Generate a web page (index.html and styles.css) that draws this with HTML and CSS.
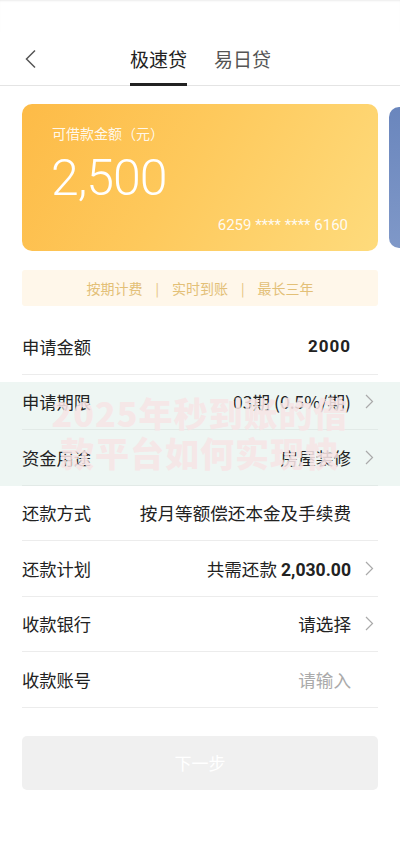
FILE: index.html
```html
<!DOCTYPE html>
<html lang="zh-CN">
<head>
<meta charset="utf-8">
<title>极速贷</title>
<link rel="stylesheet" href="styles.css">
</head>
<body>
<div class="page">
  <div class="statusbar"></div>
  <header class="nav">
    <span class="back">
      <svg width="14" height="20" viewBox="0 0 14 20"><polyline points="11,1.5 2.5,10 11,18.5" fill="none" stroke="#555" stroke-width="1.5"/></svg>
    </span>
    <div class="tabs">
      <span class="tab active">极速贷</span>
      <span class="tab">易日贷</span>
    </div>
  </header>

  <section class="carousel">
    <div class="card gold">
      <div class="card-label">可借款金额（元）</div>
      <div class="card-amount">2,500</div>
      <div class="card-no">6259 **** **** 6160</div>
    </div>
    <div class="card blue"></div>
  </section>

  <div class="strip"><span>按期计费</span><span class="sep">|</span><span>实时到账</span><span class="sep">|</span><span>最长三年</span></div>

  <div class="form">
    <div class="row"><span class="label">申请金额</span><span class="value bold">2000</span><span class="chev empty"></span></div>
    <div class="band">
      <div class="row"><span class="label">申请期限</span><span class="value">03期 (0.5%/期)</span><span class="chev"><svg width="9" height="15" viewBox="0 0 9 15"><polyline points="1,1 7.5,7.5 1,14" fill="none" stroke="#aaa" stroke-width="1.2"/></svg></span></div>
      <div class="row"><span class="label">资金用途</span><span class="value">房屋装修</span><span class="chev"><svg width="9" height="15" viewBox="0 0 9 15"><polyline points="1,1 7.5,7.5 1,14" fill="none" stroke="#aaa" stroke-width="1.2"/></svg></span></div>
      <div class="watermark">2025年秒到账的借<br>款平台如何实现快</div>
    </div>
    <div class="row"><span class="label">还款方式</span><span class="value">按月等额偿还本金及手续费</span><span class="chev empty"></span></div>
    <div class="row"><span class="label">还款计划</span><span class="value">共需还款 <b class="num">2,030.00</b></span><span class="chev"><svg width="9" height="15" viewBox="0 0 9 15"><polyline points="1,1 7.5,7.5 1,14" fill="none" stroke="#aaa" stroke-width="1.2"/></svg></span></div>
    <div class="row"><span class="label">收款银行</span><span class="value">请选择</span><span class="chev"><svg width="9" height="15" viewBox="0 0 9 15"><polyline points="1,1 7.5,7.5 1,14" fill="none" stroke="#aaa" stroke-width="1.2"/></svg></span></div>
    <div class="row"><span class="label">收款账号</span><span class="value placeholder">请输入</span><span class="chev empty"></span></div>
  </div>

  <div class="actions">
    <button class="next">下一步</button>
  </div>
</div>
</body>
</html>
```

FILE: styles.css
```css
* { box-sizing: border-box; }
html, body { margin: 0; padding: 0; background: #fff; }
body {
  font-family: "Noto Sans CJK SC", "Noto Sans", Roboto, sans-serif;
  color: #222;
  width: 400px;
  overflow: hidden;
}
.page { width: 400px; min-height: 866px; }

.statusbar {
  height: 32px;
  box-shadow: inset 0 2px 2px -1px rgba(0,0,0,0.08);
}

.nav {
  height: 54px;
  border-bottom: 1px solid #e4e4e4;
  display: flex;
  align-items: stretch;
  padding-left: 24px;
}
.back {
  display: flex;
  align-items: center;
  width: 106px;
}
.tabs { display: flex; gap: 27px; }
.tab {
  font-size: 19px;
  color: #555;
  display: flex;
  align-items: center;
  padding-top: 2px;
  border-bottom: 3px solid transparent;
  margin-bottom: -1px;
  line-height: 1;
}
.tab.active { color: #222; border-bottom-color: #222; }

.carousel {
  display: flex;
  align-items: center;
  gap: 11px;
  padding: 18px 0 0 22px;
  overflow: hidden;
}
.card {
  flex: 0 0 auto;
  border-radius: 10px;
}
.card.gold {
  width: 356px;
  height: 147px;
  background: linear-gradient(120deg, #fdbb47 0%, #fec95c 45%, #fedb7c 100%);
  padding: 19px 30px 0 30px;
  color: #fff;
  display: flex;
  flex-direction: column;
}
.card.blue {
  width: 40px;
  height: 141px;
  background: linear-gradient(180deg, #6a86bd 0%, #7f98c8 100%);
}
.card-label {
  font-size: 14px;
  line-height: 20px;
  color: rgba(255,255,255,0.9);
}
.card-amount {
  font-family: Roboto, "Noto Sans", sans-serif;
  font-weight: 300;
  font-size: 50px;
  letter-spacing: -1px;
  line-height: 56px;
  margin-top: 7px;
  margin-left: -1px;
}
.card-no {
  font-family: Roboto, "Noto Sans", sans-serif;
  font-size: 15px;
  align-self: flex-end;
  margin-top: 10px;
  color: rgba(255,255,255,0.92);
}

.strip {
  margin: 19px 22px 0;
  height: 36px;
  background: #fff7ea;
  border-radius: 3px;
  color: #e3c077;
  font-size: 14px;
  display: flex;
  align-items: center;
  justify-content: center;
  gap: 13px;
}
.sep { font-size: 13px; }

.form { margin-top: 13px; }
.band {
  position: relative;
  background: linear-gradient(#fff 0, #fff 7px, #eef6f3 7px);
}
.row {
  height: 55.5px;
  margin: 0 22px;
  border-bottom: 1px solid #ececec;
  display: flex;
  align-items: center;
}
.band .row { border-bottom-color: #e2eae7; }
.label { font-size: 17.3px; color: #222; flex: 1; }
.value { font-size: 17.6px; color: #222; }
.value.bold { font-family: Roboto, "Noto Sans", sans-serif; font-weight: 700; letter-spacing: 1px; font-size: 17px; }
.value .num { font-family: Roboto, "Noto Sans", sans-serif; font-weight: 700; }
.value.placeholder { color: #aaa; }
.chev {
  width: 27px;
  display: flex;
  justify-content: flex-end;
  padding-right: 4px;
}

.watermark {
  position: absolute;
  left: 0;
  right: 0;
  top: 18px;
  text-align: center;
  font-size: 34px;
  font-weight: 900;
  line-height: 40px;
  letter-spacing: 1px;
  color: rgba(247, 229, 230, 0.9);
  pointer-events: none;
}

.actions { padding: 28px 22px 0; }
.next {
  width: 100%;
  height: 54px;
  border: none;
  border-radius: 5px;
  background: #f0f0f0;
  color: #fff;
  font-family: "Noto Sans CJK SC", sans-serif;
  font-size: 17px;
}
```
